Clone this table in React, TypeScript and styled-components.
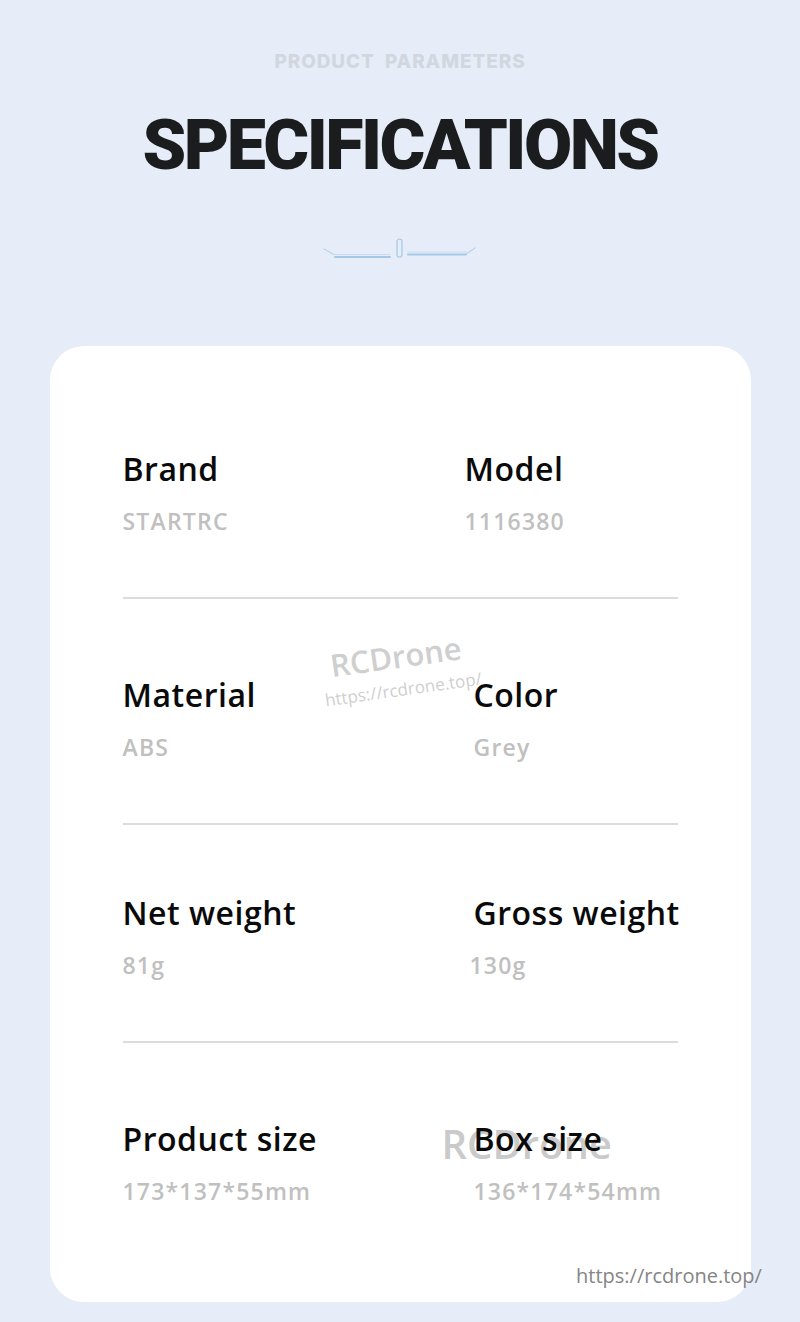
import React from "react";
import styled, { createGlobalStyle } from "styled-components";

const GlobalStyle = createGlobalStyle`
    body {
        margin: 0;
        background-color: #e6edf8;
    }
`;

const Page = styled.div`
    position: relative;
    width: 800px;
    height: 1322px;
    background-color: #e6edf8;
    display: flex;
    flex-direction: column;
    align-items: center;
    overflow: hidden;
`;

const Eyebrow = styled.div`
    margin-top: 52px;
    font-family: "Inter", "Roboto", sans-serif;
    font-weight: 800;
    font-size: 19px;
    line-height: 20px;
    color: #d2d7df;
    letter-spacing: 0.9px;
    white-space: pre;
`;

const Title = styled.h1`
    margin: 38px 0 0;
    font-family: "Roboto", "Inter", sans-serif;
    font-weight: 900;
    font-size: 70px;
    line-height: 70px;
    color: #1b1c1e;
    letter-spacing: -2.6px;
`;

const Ornament = styled.svg`
    margin-top: 58px;
    display: block;
`;

const Card = styled.div`
    position: relative;
    margin-top: 86px;
    width: 701px;
    height: 956px;
    box-sizing: border-box;
    background-color: #ffffff;
    border-radius: 34px;
    padding-left: 73px;
`;

const Row = styled.div<{ $top: number; $right: number }>`
    position: relative;
    z-index: 1;
    display: grid;
    grid-template-columns: ${(p) => p.$right}px 1fr;
    padding-top: ${(p) => p.$top}px;
    padding-bottom: 61px;
    width: 555px;
`;

const Cell = styled.div`
    display: flex;
    flex-direction: column;
    gap: 17px;
`;

const Label = styled.div`
    font-family: "Open Sans", "Noto Sans", sans-serif;
    font-weight: 600;
    font-size: 32px;
    line-height: 40px;
    letter-spacing: 0.5px;
    color: #0a0a0a;
    white-space: nowrap;
`;

const Value = styled.div<{ $shift?: number }>`
    font-family: "Open Sans", "Noto Sans", sans-serif;
    font-weight: 600;
    font-size: 23px;
    line-height: 30px;
    letter-spacing: 1.2px;
    color: #c0c0c0;
    margin-left: ${(p) => p.$shift ?? 0}px;
    white-space: nowrap;
`;

const Divider = styled.div`
    width: 555px;
    height: 2px;
    background-color: #dcdcdc;
`;

const Watermark = styled.div`
    position: absolute;
    left: 268px;
    top: 304px;
    transform: rotate(-8deg);
    transform-origin: left top;
    font-family: "Open Sans", "Noto Sans", sans-serif;
    color: #cfcfcf;
    pointer-events: none;
    z-index: 0;
`;

const WatermarkBrand = styled.div`
    font-weight: 600;
    font-size: 31px;
    line-height: 34px;
    margin-left: 10px;
`;

const WatermarkUrl = styled.div`
    margin-top: 7px;
    font-size: 17px;
    line-height: 20px;
`;

const BigWatermark = styled.div`
    position: absolute;
    left: 392px;
    top: 772px;
    font-family: "Open Sans", "Noto Sans", sans-serif;
    font-weight: 600;
    font-size: 40px;
    line-height: 52px;
    color: #cacaca;
    z-index: 0;
`;

const SiteUrl = styled.div`
    position: absolute;
    left: 576px;
    top: 1262px;
    font-family: "Open Sans", "Noto Sans", sans-serif;
    font-size: 20px;
    line-height: 28px;
    color: #858585;
`;

type Spec = { label: string; value: string; shift?: number };

const rows: { top: number; right: number; items: [Spec, Spec] }[] = [
    { top: 103, right: 342, items: [{ label: "Brand", value: "STARTRC" }, { label: "Model", value: "1116380" }] },
    { top: 76, right: 351, items: [{ label: "Material", value: "ABS" }, { label: "Color", value: "Grey" }] },
    { top: 68, right: 351, items: [{ label: "Net weight", value: "81g" }, { label: "Gross weight", value: "130g", shift: -4 }] },
    { top: 76, right: 351, items: [{ label: "Product size", value: "173*137*55mm" }, { label: "Box size", value: "136*174*54mm" }] },
];

const App = () => {
    return (
        <Page>
            <GlobalStyle />
            <Eyebrow>{"PRODUCT  PARAMETERS"}</Eyebrow>
            <Title>SPECIFICATIONS</Title>
            <Ornament width="154" height="22" viewBox="0 0 154 22">
                <g fill="none" strokeLinecap="round">
                    <path d="M1 11 L10 16" stroke="#b8d2ec" strokeWidth="1.2" />
                    <path d="M10 16.5 H67" stroke="#c6dcf0" strokeWidth="1" />
                    <path d="M12 19 H67" stroke="#a6c8e8" strokeWidth="2" />
                    <rect x="74" y="1" width="5" height="18" rx="2.5" stroke="#a6c8e8" strokeWidth="1.2" />
                    <path d="M85 14 H143" stroke="#c6dcf0" strokeWidth="1" />
                    <path d="M85 16.5 H143" stroke="#a6c8e8" strokeWidth="2" />
                    <path d="M143 16 L152 10" stroke="#b8d2ec" strokeWidth="1.2" />
                </g>
            </Ornament>
            <Card>
                <Watermark>
                    <WatermarkBrand>RCDrone</WatermarkBrand>
                    <WatermarkUrl>https://rcdrone.top/</WatermarkUrl>
                </Watermark>
                <BigWatermark>RCDrone</BigWatermark>
                {rows.map((row, i) => (
                    <React.Fragment key={row.items[0].label}>
                        <Row $top={row.top} $right={row.right}>
                            {row.items.map((item) => (
                                <Cell key={item.label}>
                                    <Label>{item.label}</Label>
                                    <Value $shift={item.shift}>{item.value}</Value>
                                </Cell>
                            ))}
                        </Row>
                        {i < rows.length - 1 && <Divider />}
                    </React.Fragment>
                ))}
            </Card>
            <SiteUrl>https://rcdrone.top/</SiteUrl>
        </Page>
    );
};

export default App;
